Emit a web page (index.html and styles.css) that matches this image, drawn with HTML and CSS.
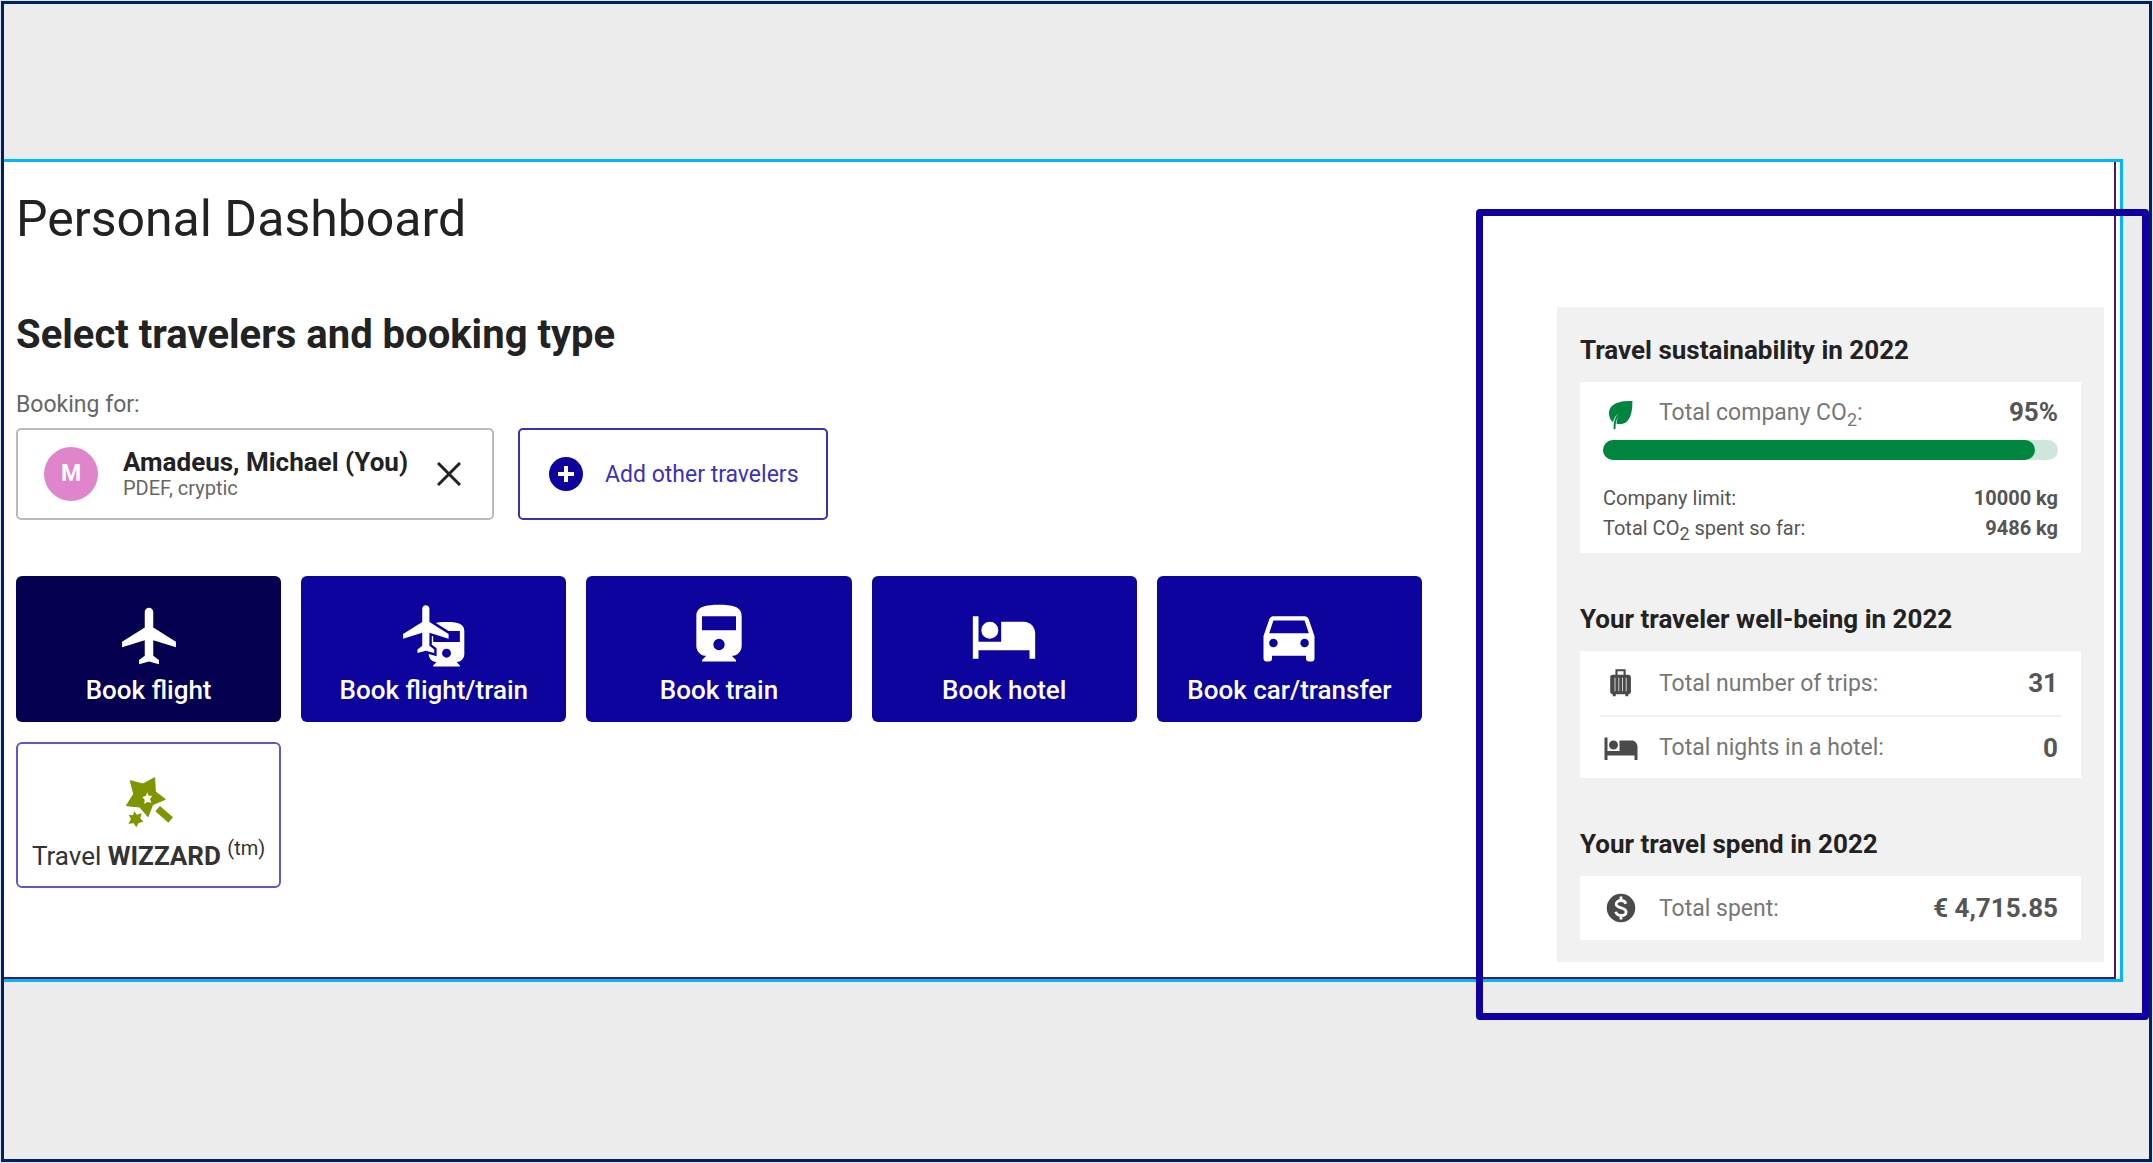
FILE: index.html
```html
<!DOCTYPE html>
<html lang="en">
<head>
<meta charset="utf-8">
<title>Personal Dashboard</title>
<link rel="stylesheet" href="styles.css">
</head>
<body>
<div class="frame">
  <div class="sheet">
    <div class="page">
      <main class="main">
        <h1 class="title">Personal Dashboard</h1>
        <h2 class="subtitle">Select travelers and booking type</h2>
        <p class="caption">Booking for:</p>
        <div class="travelers">
          <div class="traveler">
            <span class="avatar">M</span>
            <div class="who"><strong class="name">Amadeus, Michael (You)</strong><span class="profile">PDEF, cryptic</span></div>
            <button class="remove" aria-label="Remove traveler"><svg class="cross" viewBox="0 0 24 24"><path d="M1 1l22 22M23 1L1 23" fill="none" stroke="currentColor" stroke-width="3"/></svg></button>
          </div>
          <button class="add"><svg class="plus" viewBox="0 0 34 34"><circle cx="17" cy="17" r="17"/><path d="M17 9v16M9 17h16" stroke="#fff" stroke-width="4"/></svg>Add other travelers</button>
        </div>
        <div class="tiles">
          <button class="tile active"><svg class="glyph" viewBox="-.5 0 24 24"><path d="M21 16v-2l-8-5V3.500c0-.83-.67-1.500-1.500-1.500S10 2.670 10 3.500V9l-8 5v2l8-2.500V19l-2 1.500V22l3.500-1 3.500 1v-1.500L13 19v-5.500l8 2.500z"/></svg>Book flight</button>
          <button class="tile"><svg class="glyph" viewBox="0 0 24 24"><path transform="translate(7 6.300) scale(.785)" d="M4 15.500C4 17.430 5.570 19 7.500 19L6 20.500v.5h12v-.5L16.500 19c1.930 0 3.500-1.570 3.500-3.500V5c0-3.500-3.580-4-8-4s-8 .5-8 4zm8 1.500a2 2 0 1 1 0-4 2 2 0 0 1 0 4zm6-7H6V5h12z"/><path class="cutout" transform="translate(-.6 -.58) scale(.845)" d="M21 16v-2l-8-5V3.500c0-.83-.67-1.500-1.500-1.500S10 2.670 10 3.500V9l-8 5v2l8-2.500V19l-2 1.500V22l3.500-1 3.500 1v-1.500L13 19v-5.500l8 2.500z"/></svg>Book flight/train</button>
          <button class="tile"><svg class="glyph" viewBox="0 0 24 24"><path d="M4 15.500C4 17.430 5.570 19 7.500 19L6 20.500v.5h12v-.5L16.500 19c1.930 0 3.500-1.570 3.500-3.500V5c0-3.500-3.580-4-8-4s-8 .5-8 4zm8 1.500a2 2 0 1 1 0-4 2 2 0 0 1 0 4zm6-7H6V5h12z"/></svg>Book train</button>
          <button class="tile"><svg class="glyph" viewBox="0 0 24 24"><path d="M7 13a3 3 0 1 0 0-6 3 3 0 0 0 0 6zm12-6h-8v7H3V5H1v15h2v-3h18v3h2v-9c0-2.210-1.790-4-4-4z"/></svg>Book hotel</button>
          <button class="tile"><svg class="glyph" viewBox="0 0 24 24"><path d="M18.920 6.010C18.720 5.420 18.160 5 17.500 5h-11c-.66 0-1.210.42-1.420 1.010L3 12v8c0 .55.45 1 1 1h1c.55 0 1-.45 1-1v-1h12v1c0 .55.45 1 1 1h1c.55 0 1-.45 1-1v-8zM6.500 16a1.500 1.500 0 1 1 0-3 1.500 1.500 0 0 1 0 3zm11 0a1.500 1.500 0 1 1 0-3 1.500 1.500 0 0 1 0 3zM5 11l1.500-4.500h11L19 11z"/></svg>Book car/transfer</button>
          <button class="tile wizard"><svg class="glyph wand" viewBox="13 9 204 204"><path stroke="currentColor" stroke-width="3" stroke-linejoin="round" d="M59 47L97 57 132 38 134 80 164 103 126 119 112 155 87 126 47 122 69 87z"/><path fill="#fff" d="M110 82L105 93 95 96 102 104 101 117 110 111 122 113 118 102 125 92 114 92z"/><path d="M71 138L78 149 93 145 89 160 98 170 84 174 77 187 69 175 53 176 61 162 54 149 67 151z"/><path d="M141 131L180 165" fill="none" stroke="currentColor" stroke-width="21"/></svg><span>Travel <b>WIZZARD</b> <sup>(tm)</sup></span></button>
        </div>
      </main>
      <aside class="stats">
        <section>
          <h3 class="heading">Travel sustainability in 2022</h3>
          <div class="card carbon">
            <div class="row compact"><svg class="icon leaf" viewBox="0 0 24 24"><path d="M19.600 4.700C12 4.400 4 6 4 13c0 2.400 1 4.500 2.700 5.800C7.200 16 9 13.500 12 12c-1.700 2-2.700 4.500-3 7.900C16 21.500 19.800 16 19.600 4.700z"/><path d="M7.700 23.400c-.2-4 .8-8.400 4.300-11.400" fill="none" stroke="currentColor" stroke-width="1.300"/></svg><span class="label">Total company CO<sub>2</sub>:</span><b class="value">95%</b></div>
            <div class="bar"><div class="fill" style="width:95%"></div></div>
            <div class="detail"><span>Company limit:</span><b>10000 kg</b></div>
            <div class="detail"><span>Total CO<sub>2</sub> spent so far:</span><b>9486 kg</b></div>
          </div>
        </section>
        <section>
          <h3 class="heading">Your traveler well-being in 2022</h3>
          <div class="card">
            <div class="row"><svg class="icon" viewBox="0 0 24 24"><path d="M9 7V3.500h5.400V7" fill="none" stroke="currentColor" stroke-width="1.400"/><path d="M6.500 6.500h10.400c1 0 1.700.7 1.700 1.700v9.600c0 1-.7 1.700-1.700 1.700v1.300h-2v-1.300H8.500v1.300h-2v-1.300c-1 0-1.700-.7-1.700-1.700V8.200c0-1 .7-1.700 1.700-1.700z"/><path d="M8 8.500v9M10.500 8.500v9M13 8.500v9M15.500 8.500v9" stroke="#ccc" stroke-width=".7"/></svg><span class="label">Total number of trips:</span><b class="value">31</b></div>
            <div class="row"><svg class="icon" viewBox="0 0 24 24"><path d="M7 13a3 3 0 1 0 0-6 3 3 0 0 0 0 6zm12-6h-8v7H3V5H1v15h2v-3h18v3h2v-9c0-2.210-1.790-4-4-4z"/></svg><span class="label">Total nights in a hotel:</span><b class="value">0</b></div>
          </div>
        </section>
        <section>
          <h3 class="heading">Your travel spend in 2022</h3>
          <div class="card">
            <div class="row"><svg class="icon" viewBox="0 0 24 24"><circle cx="12" cy="12" r="9.500"/><path d="M15.300 9.200C14.800 7.700 13.600 7 12 7c-1.900 0-3.200 1-3.200 2.400 0 3.300 6.600 1.800 6.600 5.200 0 1.500-1.400 2.400-3.300 2.400-1.900 0-3.200-.9-3.600-2.500M12 4.300V7M12 17v2.700" fill="none" stroke="#fff" stroke-width="1.900"/></svg><span class="label">Total spent:</span><b class="value">€ 4,715.85</b></div>
          </div>
        </section>
      </aside>
    </div>
  </div>
  <div class="highlight"></div>
</div>
</body>
</html>
```
FILE: styles.css
```css
* { box-sizing: border-box; }
body { margin: 0; padding: 1px; background: #dfe5ee; font-family: Roboto, "Liberation Sans", sans-serif; color: #222; }
h1, h2, h3, p { margin: 0; }
button { font: inherit; cursor: pointer; }
svg { display: block; flex: none; fill: currentColor; }
sub, sup { line-height: 0; }

.frame { position: relative; min-height: calc(100vh - 2px); border: 3px solid #002060; background: #ececec; padding: 155px 26px 0 0; }
.sheet { border: solid #00b7ff; border-width: 3px 3px 3px 0; background: #fff; padding-right: 4px; }
.page { display: grid; grid-template-columns: minmax(0, 1fr) 547px; column-gap: 135px; padding: 27px 10px 15px 12px; border: solid #501a50; border-width: 0 2px 2px 0; }

.title { font-size: 50px; line-height: 60px; font-weight: 400; }
.subtitle { margin-top: 62px; font-size: 40px; line-height: 48px; font-weight: 700; }
.caption { margin-top: 32px; font-size: 23px; line-height: 28px; color: #666; }

.travelers { display: flex; gap: 24px; margin-top: 9px; }
.traveler, .add { display: flex; align-items: center; height: 92px; border: 2px solid #bbb; border-radius: 5px; background: #fff; }
.traveler { width: 478px; padding: 0 31px 0 26px; }
.avatar { width: 54px; height: 54px; border-radius: 50%; background: #e084cb; color: #fff; font-size: 23px; line-height: 54px; font-weight: 700; text-align: center; }
.who { display: flex; flex: 1; flex-direction: column; margin-left: 25px; white-space: nowrap; }
.name { font-size: 26px; line-height: 28px; font-weight: 700; }
.profile { font-size: 20px; line-height: 24px; color: #666; }
.remove { padding: 0; border: 0; background: none; color: #222; }
.cross { width: 24px; height: 24px; }
.add { width: 310px; padding: 0 24px 0 29px; gap: 22px; border-color: #3a32b0; color: #3a32b8; font-size: 23px; white-space: nowrap; }
.plus { width: 34px; height: 34px; color: #0c049c; }

.tiles { display: grid; grid-template-columns: repeat(5, minmax(0, 1fr)); gap: 20px; margin-top: 56px; }
.tile { display: flex; flex-direction: column; align-items: center; height: 146px; padding: 26px 0 0; border: 0; border-radius: 6px; background: #0c049c; color: #fff; font-size: 26px; line-height: 30px; font-weight: 500; white-space: nowrap; }
.glyph { width: 68px; height: 68px; margin-bottom: 5px; }
.cutout { stroke: #0c049c; stroke-width: 2; paint-order: stroke; }
.active { background: #060050; }
.wizard { padding-top: 24px; border: 2px solid #6058c8; background: #fff; color: #333; font-weight: 400; }
.wizard sup { font-size: 20px; }
.wand { color: #7f9500; }

.stats { margin-top: 118px; padding: 25px 23px 22px; background: #f1f1f1; }
.stats section + section { margin-top: 48px; }
.heading { font-size: 26px; line-height: 36px; font-weight: 700; }
.card { margin-top: 14px; padding: 0 20px; background: #fff; }
.carbon { padding-bottom: 10px; }
.row { display: flex; align-items: center; height: 64px; padding: 0 3px; font-size: 23px; color: #777; }
.row + .row { height: 63px; border-top: 2px solid #f1f1f1; }
.compact { height: 58px; padding-top: 2px; }
.icon { width: 36px; height: 36px; color: #4a4a4a; }
.leaf { color: #00853e; }
.label { flex: 1; margin-left: 20px; }
.value { font-size: 26px; font-weight: 700; color: #555; }
.bar { height: 20px; margin: 0 3px 23px; border-radius: 10px; background: #cde8da; }
.fill { height: 20px; border-radius: 10px; background: #00853e; }
.detail { display: flex; justify-content: space-between; padding: 0 3px; font-size: 20px; line-height: 30px; color: #555; }
.detail b { font-weight: 700; }
.stats sub { font-size: 18px; }

.highlight { position: absolute; top: 205px; right: 0; width: 673px; height: 811px; border: 7px solid #1000a0; border-radius: 4px; pointer-events: none; }
```
